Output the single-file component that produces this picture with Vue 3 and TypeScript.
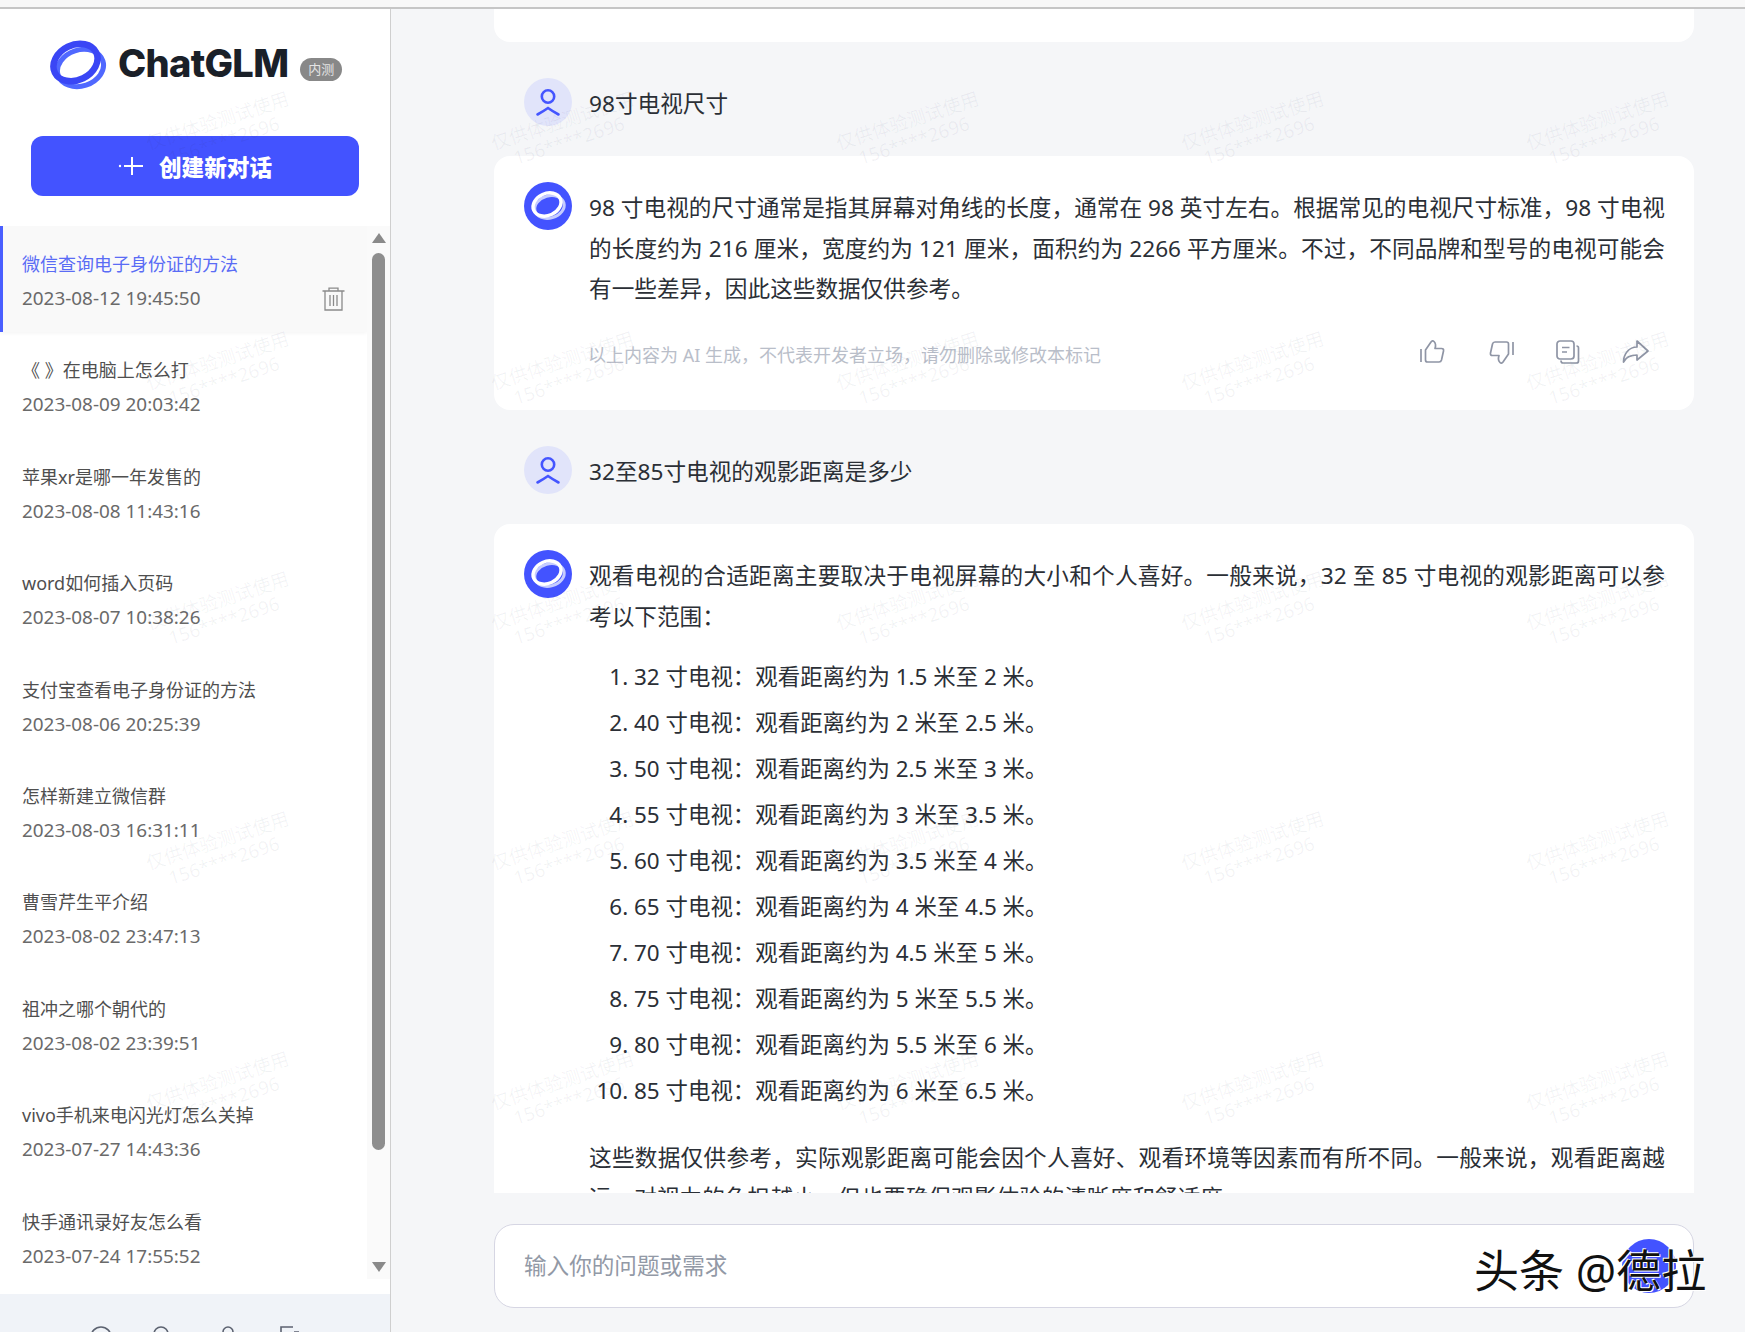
<script setup lang="ts">
const history = [
  ['微信查询电子身份证的方法', '2023-08-12 19:45:50'],
  ['《 》在电脑上怎么打', '2023-08-09 20:03:42'],
  ['苹果xr是哪一年发售的', '2023-08-08 11:43:16'],
  ['word如何插入页码', '2023-08-07 10:38:26'],
  ['支付宝查看电子身份证的方法', '2023-08-06 20:25:39'],
  ['怎样新建立微信群', '2023-08-03 16:31:11'],
  ['曹雪芹生平介绍', '2023-08-02 23:47:13'],
  ['祖冲之哪个朝代的', '2023-08-02 23:39:51'],
  ['vivo手机来电闪光灯怎么关掉', '2023-07-27 14:43:36'],
  ['快手通讯录好友怎么看', '2023-07-24 17:55:52'],
]
const distances = [
  '32 寸电视：观看距离约为 1.5 米至 2 米。',
  '40 寸电视：观看距离约为 2 米至 2.5 米。',
  '50 寸电视：观看距离约为 2.5 米至 3 米。',
  '55 寸电视：观看距离约为 3 米至 3.5 米。',
  '60 寸电视：观看距离约为 3.5 米至 4 米。',
  '65 寸电视：观看距离约为 4 米至 4.5 米。',
  '70 寸电视：观看距离约为 4.5 米至 5 米。',
  '75 寸电视：观看距离约为 5 米至 5.5 米。',
  '80 寸电视：观看距离约为 5.5 米至 6 米。',
  '85 寸电视：观看距离约为 6 米至 6.5 米。',
]
const marks = Array.from({ length: 25 }, (_, i) => i)
</script>

<template>
  <div class="app">
    <div class="topbar"></div>
    <div class="body">
      <aside class="sidebar">
        <div class="brand">
          <svg class="logo" width="58" height="52" viewBox="0 0 58 52">
            <ellipse cx="31.500" cy="29" rx="23.500" ry="18" transform="rotate(-18 31.500 29)" fill="none" stroke="#5068ff" stroke-width="5" />
            <ellipse cx="26.500" cy="23.500" rx="23" ry="17.500" transform="rotate(-26 26.500 23.500)" fill="none" stroke="#3a46f5" stroke-width="6.500" />
          </svg>
          <span class="brand-name">ChatGLM</span>
          <span class="badge">内测</span>
        </div>
        <button class="new-chat">
          <svg width="26" height="24" viewBox="0 0 26 24">
            <circle cx="2" cy="12" r="1.200" fill="#fff" />
            <path d="M14 3v18M6 12h19" stroke="#fff" stroke-width="2" fill="none" />
          </svg>
          <span>创建新对话</span>
        </button>
        <div class="history">
          <ul class="items">
            <li v-for="(h, i) in history" :key="h[1]" class="item" :class="{ active: i === 0 }">
              <div class="title">{{ h[0] }}</div>
              <div class="date">{{ h[1] }}</div>
              <svg v-if="i === 0" class="trash" width="23" height="24" viewBox="0 0 23 24" fill="none" stroke="#8a8a8a" stroke-width="1.3">
                <path d="M0.5 4h22M7 4V1.2h9V4M3 4v19h17V4M8 8v11M11.5 8v11M15 8v11" />
              </svg>
            </li>
          </ul>
          <div class="scrollbar">
            <span class="arrow up"></span>
            <span class="thumb"></span>
            <span class="arrow down"></span>
          </div>
        </div>
        <div class="foot">
          <svg class="fi a" width="22" height="22" viewBox="0 0 22 22" fill="none" stroke="#5c6270" stroke-width="1.6"><circle cx="11" cy="11" r="10" /></svg>
          <svg class="fi b" width="16" height="22" viewBox="0 0 16 22" fill="none" stroke="#5c6270" stroke-width="1.6"><circle cx="8" cy="8" r="7" /></svg>
          <svg class="fi c" width="12" height="22" viewBox="0 0 12 22" fill="none" stroke="#5c6270" stroke-width="1.6"><path d="M1 14V6a5 5 0 0 1 10 0v8" /></svg>
          <svg class="fi d" width="20" height="22" viewBox="0 0 20 22" fill="none" stroke="#5c6270" stroke-width="1.6"><path d="M13 1H1v14M14 6h5" /></svg>
        </div>
      </aside>

      <main class="main">
        <div class="chat">
          <div class="card stub"></div>

          <div class="question">
            <span class="avatar user">
              <svg width="48" height="48" viewBox="0 0 48 48" fill="none" stroke="#4455ff" stroke-width="2.6" stroke-linecap="round"><circle cx="24" cy="18.5" r="6.2" /><path d="M13.5 36.5 Q19 33.5 24 30 Q29 33.5 34.5 36.5" /></svg>
            </span>
            <span>98寸电视尺寸</span>
          </div>
          <section class="card answer first">
            <span class="avatar bot">
              <svg width="48" height="48" viewBox="0 0 48 48" fill="none"><ellipse cx="25.5" cy="25" rx="15" ry="11" transform="rotate(-16 25.5 25)" stroke="#c5ccff" stroke-width="3" /><ellipse cx="23" cy="22.500" rx="14.500" ry="11" transform="rotate(-24 23 22.500)" stroke="#fff" stroke-width="3.400" /></svg>
            </span>
            <div class="content">
              <p>98 寸电视的尺寸通常是指其屏幕对角线的长度，通常在 98 英寸左右。根据常见的电视尺寸标准，98 寸电视的长度约为 216 厘米，宽度约为 121 厘米，面积约为 2266 平方厘米。不过，不同品牌和型号的电视可能会有一些差异，因此这些数据仅供参考。</p>
              <div class="meta">
                <span class="notice">以上内容为 AI 生成，不代表开发者立场，请勿删除或修改本标记</span>
                <div class="actions">
                  <svg width="26" height="26" viewBox="0 0 26 26" fill="none" stroke="#8f95a5" stroke-width="1.7" stroke-linejoin="round"><path d="M1 10v13M5.500 11 L11 3 Q12.500 1 14 2.500 Q16.500 5 15 9.500 H21.500 Q24 9.500 23.500 12 L21.500 21 Q21 23 19 23 H7.500 Q5.500 23 5.500 21 Z" /></svg>
                  <svg width="26" height="26" viewBox="0 0 26 26" fill="none" stroke="#8f95a5" stroke-width="1.700" stroke-linejoin="round"><path transform="rotate(180 13 13)" d="M1 10v13M5.500 11 L11 3 Q12.500 1 14 2.500 Q16.500 5 15 9.500 H21.500 Q24 9.500 23.500 12 L21.500 21 Q21 23 19 23 H7.500 Q5.500 23 5.500 21 Z" /></svg>
                  <svg width="24" height="24" viewBox="0 0 24 24" fill="none" stroke="#8f95a5" stroke-width="1.700"><rect x="1" y="1" width="17" height="18" rx="3" /><path d="M20.500 6 Q22.500 6 22.500 8 V21 Q22.500 23 20.500 23 H7 Q5 23 5 20.500 M6 7.500h7.500M6 12h5" /></svg>
                  <svg width="28" height="24" viewBox="0 0 28 24" fill="none" stroke="#8f95a5" stroke-width="1.700" stroke-linejoin="round"><path d="M15 1 L26 11 L15 20 V15 C9 15 4 17 1.500 22 C1.500 14 7 7 15 7 Z" /></svg>
                </div>
              </div>
            </div>
          </section>

          <div class="question">
            <span class="avatar user">
              <svg width="48" height="48" viewBox="0 0 48 48" fill="none" stroke="#4455ff" stroke-width="2.6" stroke-linecap="round"><circle cx="24" cy="18.500" r="6.200" /><path d="M13.500 36.500 Q19 33.500 24 30 Q29 33.500 34.500 36.500" /></svg>
            </span>
            <span>32至85寸电视的观影距离是多少</span>
          </div>
          <section class="card answer">
            <span class="avatar bot">
              <svg width="48" height="48" viewBox="0 0 48 48" fill="none"><ellipse cx="25.500" cy="25" rx="15" ry="11" transform="rotate(-16 25.500 25)" stroke="#c5ccff" stroke-width="3" /><ellipse cx="23" cy="22.500" rx="14.500" ry="11" transform="rotate(-24 23 22.500)" stroke="#fff" stroke-width="3.400" /></svg>
            </span>
            <div class="content">
              <p>观看电视的合适距离主要取决于电视屏幕的大小和个人喜好。一般来说，32 至 85 寸电视的观影距离可以参考以下范围：</p>
              <ol>
                <li v-for="d in distances" :key="d">{{ d }}</li>
              </ol>
              <p>这些数据仅供参考，实际观影距离可能会因个人喜好、观看环境等因素而有所不同。一般来说，观看距离越远，对视力的负担越小，但也要确保观影体验的清晰度和舒适度。</p>
            </div>
          </section>
        </div>

        <div class="composer">
          <span class="placeholder">输入你的问题或需求</span>
          <span class="send"></span>
        </div>
      </main>
    </div>

    <div class="watermarks">
      <div v-for="m in marks" :key="m" class="mark">
        <span>仅供体验测试使用</span>
        <span>156****2696</span>
      </div>
    </div>
    <div class="stamp">头条 @德拉</div>
  </div>
</template>

<style>
html, body { margin: 0; overflow: hidden; }
</style>

<style scoped>
.app {
  position: relative;
  display: flex;
  flex-direction: column;
  width: 1745px;
  height: 1332px;
  overflow: hidden;
  font-family: "Noto Sans", "Noto Sans CJK SC", sans-serif;
  background: #f5f6f8;
}
.topbar {
  height: 7px;
  flex: none;
  background: #f8f8f8;
  border-bottom: 2px solid #c6c6c6;
}
.body { display: flex; flex: 1; min-height: 0; }

.sidebar {
  width: 390px;
  flex: none;
  display: flex;
  flex-direction: column;
  background: #fff;
  border-right: 1px solid #cfcfcf;
}
.brand {
  display: flex;
  align-items: center;
  flex: none;
  height: 127px;
  padding-left: 49px;
  box-sizing: border-box;
  padding-bottom: 16px;
}
.logo { flex: none; margin-right: 11px; margin-top: 1px; }
.brand-name {
  font-family: Inter, sans-serif;
  font-weight: 800;
  font-size: 38px;
  letter-spacing: -0.7px;
  color: #1a2028;
  line-height: 1;
  margin-top: -4px;
}
.badge {
  width: 42px;
  height: 23px;
  margin-left: 12px;
  margin-top: 10px;
  border-radius: 12px;
  background: #888;
  color: #e4e4e4;
  font-size: 13px;
  line-height: 23px;
  text-align: center;
}
.new-chat {
  display: flex;
  flex: none;
  align-items: center;
  justify-content: center;
  gap: 15px;
  width: 328px;
  height: 60px;
  margin-left: 31px;
  padding: 0;
  border: 0;
  border-radius: 12px;
  background: #4353ff;
  color: #fff;
  font-family: inherit;
  font-size: 22.6px;
  font-weight: 900;
}
.history {
  position: relative;
  height: 1053px;
  margin-top: 30px;
  flex: none;
  overflow: hidden;
}
.items { list-style: none; margin: 0; padding: 0; width: 367px; }
.item {
  position: relative;
  height: 106.4px;
  box-sizing: border-box;
  padding: 22px 0 0 22px;
}
.item.active {
  padding-left: 19px;
  background: #f9f9f9;
  border-left: 3px solid #4a5fff;
  box-shadow: 0 1px 4px rgba(0, 0, 0, 0.05);
}
.title { font-size: 18px; line-height: 33px; color: #4f4f4f; white-space: nowrap; }
.date { font-size: 18.9px; line-height: 34px; color: #6a6a6a; white-space: nowrap; }
.active .title { color: #5a6cf5; }
.trash { position: absolute; right: 22px; bottom: 21px; }
.scrollbar {
  position: absolute;
  top: 0;
  bottom: 0;
  right: 0;
  width: 23px;
  background: #fafafa;
}
.thumb {
  position: absolute;
  left: 5px;
  top: 27px;
  width: 13px;
  height: 897px;
  border-radius: 7px;
  background: #8e8e8e;
}
.arrow {
  position: absolute;
  left: 5px;
  width: 0;
  height: 0;
  border-left: 7px solid transparent;
  border-right: 7px solid transparent;
}
.arrow.up { top: 7px; border-bottom: 10px solid #8a8a8a; }
.arrow.down { bottom: 7px; border-top: 10px solid #8a8a8a; }
.foot {
  flex: none;
  height: 38px;
  box-sizing: border-box;
  overflow: hidden;
  margin-top: 15px;
  background: #f0f3f8;
  display: flex;
  align-items: flex-start;
  padding: 32px 0 0 90px;
}
.fi { flex: none; }
.fi.b { margin-left: 41px; }
.fi.c { margin-left: 53px; }
.fi.d { margin-left: 46px; }

.main {
  flex: 1;
  min-width: 0;
  display: flex;
  flex-direction: column;
  padding: 0 51px 0 103px;
  color: #2b2f36;
  font-size: 22.65px;
}
.chat { height: 1184px; flex: none; overflow: hidden; }
.card { background: #fff; border-radius: 16px; }
.stub { height: 33px; border-radius: 0 0 16px 16px; }
.question {
  display: flex;
  align-items: center;
  gap: 17px;
  height: 48px;
  padding-left: 30px;
  margin: 36px 0 30px;
}
.avatar { width: 48px; height: 48px; border-radius: 50%; flex: none; display: block; }
.avatar svg { display: block; }
.avatar.user { background: #e1e4fa; }
.avatar.bot { background: #4353ff; }
.answer {
  display: flex;
  gap: 17px;
  padding: 26px 29px 26px 30px;
}
.answer.first { padding-bottom: 36px; }
.content { flex: 1; min-width: 0; padding-top: 6px; }
.content p { margin: 0; line-height: 40.6px; text-align: justify; }
ol { margin: 16px 0 23px; padding-left: 45px; }
ol li { line-height: 46.1px; font-size: 22.45px; }
.meta {
  display: flex;
  align-items: center;
  justify-content: space-between;
  margin-top: 24.600px;
  height: 40px;
}
.notice {
  font-size: 18px;
  color: #b9bec9;
  margin-left: -1px;
}
.actions {
  display: flex;
  align-items: center;
  gap: 42px;
  margin-right: 15px;
  margin-top: -4px;
}
.actions svg { display: block; }
.composer {
  position: relative;
  display: flex;
  align-items: center;
  height: 84px;
  margin-top: 31px;
  padding: 0 0 4px 29px;
  box-sizing: border-box;
  background: #fff;
  border: 1px solid #d6d6e3;
  border-radius: 20px;
  flex: none;
}
.placeholder { color: #9299a6; font-size: 22.6px; }
.send {
  position: absolute;
  right: 17px;
  top: 14px;
  width: 54px;
  height: 54px;
  border-radius: 50%;
  background: #4353ff;
}
.watermarks {
  position: absolute;
  left: 48px;
  top: 10px;
  display: grid;
  grid-template-columns: repeat(5, 345px);
  grid-auto-rows: 240px;
  pointer-events: none;
}
.mark {
  display: flex;
  flex-direction: column;
  align-items: center;
  justify-content: center;
  transform: rotate(-18deg);
  font-size: 18.6px;
  line-height: 21px;
  color: rgba(40, 50, 90, 0.06);
  white-space: nowrap;
}
.stamp {
  position: absolute;
  left: 1474px;
  top: 1241px;
  font-size: 45px;
  line-height: 60px;
  color: #111;
  white-space: nowrap;
  text-shadow: 1px 1px 0 #fff, -1px -1px 0 #fff;
  pointer-events: none;
}
</style>
